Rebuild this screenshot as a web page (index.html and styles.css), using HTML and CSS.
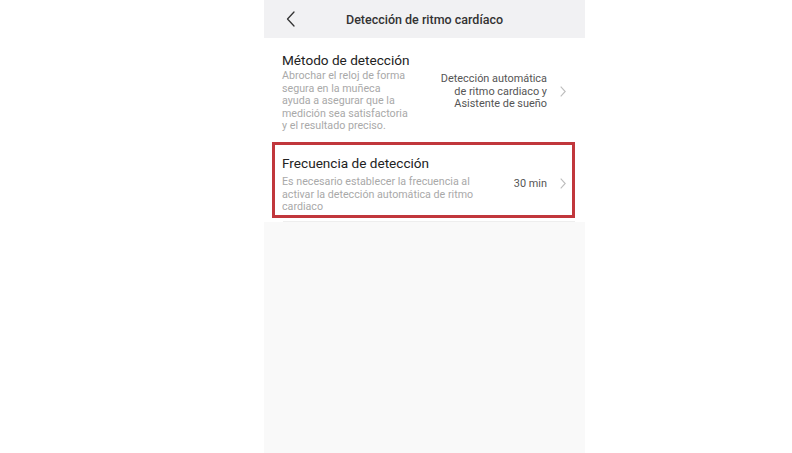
FILE: index.html
```html
<!DOCTYPE html>
<html lang="es">
<head>
<meta charset="utf-8">
<title>Detección de ritmo cardíaco</title>
<link rel="stylesheet" href="styles.css">
</head>
<body>
<div class="screen">
  <header class="topbar">
    <svg class="back" width="10" height="16" viewBox="0 0 10 16"><path d="M8 1 L1.5 8 L8 15" fill="none" stroke="#333" stroke-width="1.3" stroke-linecap="round" stroke-linejoin="round"/></svg>
    <h1 class="topbar-title">Detección de ritmo cardíaco</h1>
  </header>
  <section class="list">
    <div class="item item-method">
      <div class="item-text">
        <div class="item-title">Método de detección</div>
        <div class="item-desc">Abrochar el reloj de forma<br>segura en la muñeca<br>ayuda a asegurar que la<br>medición sea satisfactoria<br>y el resultado preciso.</div>
      </div>
      <div class="item-value">Detección automática<br>de ritmo cardiaco y<br>Asistente de sueño</div>
      <svg class="chev" width="6" height="11" viewBox="0 0 6 11"><path d="M0.7 0.7 L5.2 5.5 L0.7 10.3" fill="none" stroke="#bdbdbd" stroke-width="1.1"/></svg>
    </div>
    <div class="item item-freq">
      <div class="item-text">
        <div class="item-title">Frecuencia de detección</div>
        <div class="item-desc">Es necesario establecer la frecuencia al<br>activar la detección automática de ritmo<br>cardiaco</div>
      </div>
      <div class="item-value">30 min</div>
      <svg class="chev" width="6" height="11" viewBox="0 0 6 11"><path d="M0.7 0.7 L5.2 5.5 L0.7 10.3" fill="none" stroke="#bdbdbd" stroke-width="1.1"/></svg>
    </div>
    <div class="divider"></div>
  </section>
  <div class="rest"></div>
</div>
</body>
</html>
```
FILE: styles.css
```css
* { box-sizing: border-box; }
html, body { margin: 0; padding: 0; background: #ffffff; }
body { font-family: Roboto, "Noto Sans", Arial, sans-serif; }

.screen {
  margin-left: 264px;
  width: 321px;
  height: 453px;
  display: flex;
  flex-direction: column;
  background: #ffffff;
}

.topbar {
  height: 38px;
  flex: 0 0 38px;
  background: #f1f1f3;
  display: flex;
  align-items: center;
  justify-content: center;
  position: relative;
}
.back {
  position: absolute;
  left: 22px;
  top: 11px;
}
.topbar-title {
  margin: 0;
  font-size: 12.5px;
  font-weight: 500;
  color: #333;
}

.list {
  background: #ffffff;
  display: flex;
  flex-direction: column;
}

.item {
  display: flex;
  align-items: center;
}
.item-text { flex: 1; }
.item-title {
  font-size: 13.6px;
  line-height: 18px;
  color: #222;
  white-space: nowrap;
}
.item-desc {
  font-size: 10.7px;
  line-height: 12.6px;
  color: #a9a9a9;
  white-space: nowrap;
}
.item-value {
  font-size: 10.9px;
  line-height: 12.6px;
  color: #555;
  text-align: right;
  white-space: nowrap;
}
.chev { margin-left: 13px; flex: 0 0 auto; }

.item-method {
  padding: 13px 19px 8px 18px;
}
.item-method .item-desc { margin-top: 1px; }

.item-freq {
  margin: 1px 10px 0 8px;
  border: 3px solid #c1373c;
  padding: 9px 6px 1px 7px;
}
.item-freq .item-desc { margin-top: 4px; }

.divider {
  height: 1px;
  margin: 3px 10px 0 19px;
  background: #eeeeee;
}

.rest {
  flex: 1;
  background: #f9f9f9;
}
```
